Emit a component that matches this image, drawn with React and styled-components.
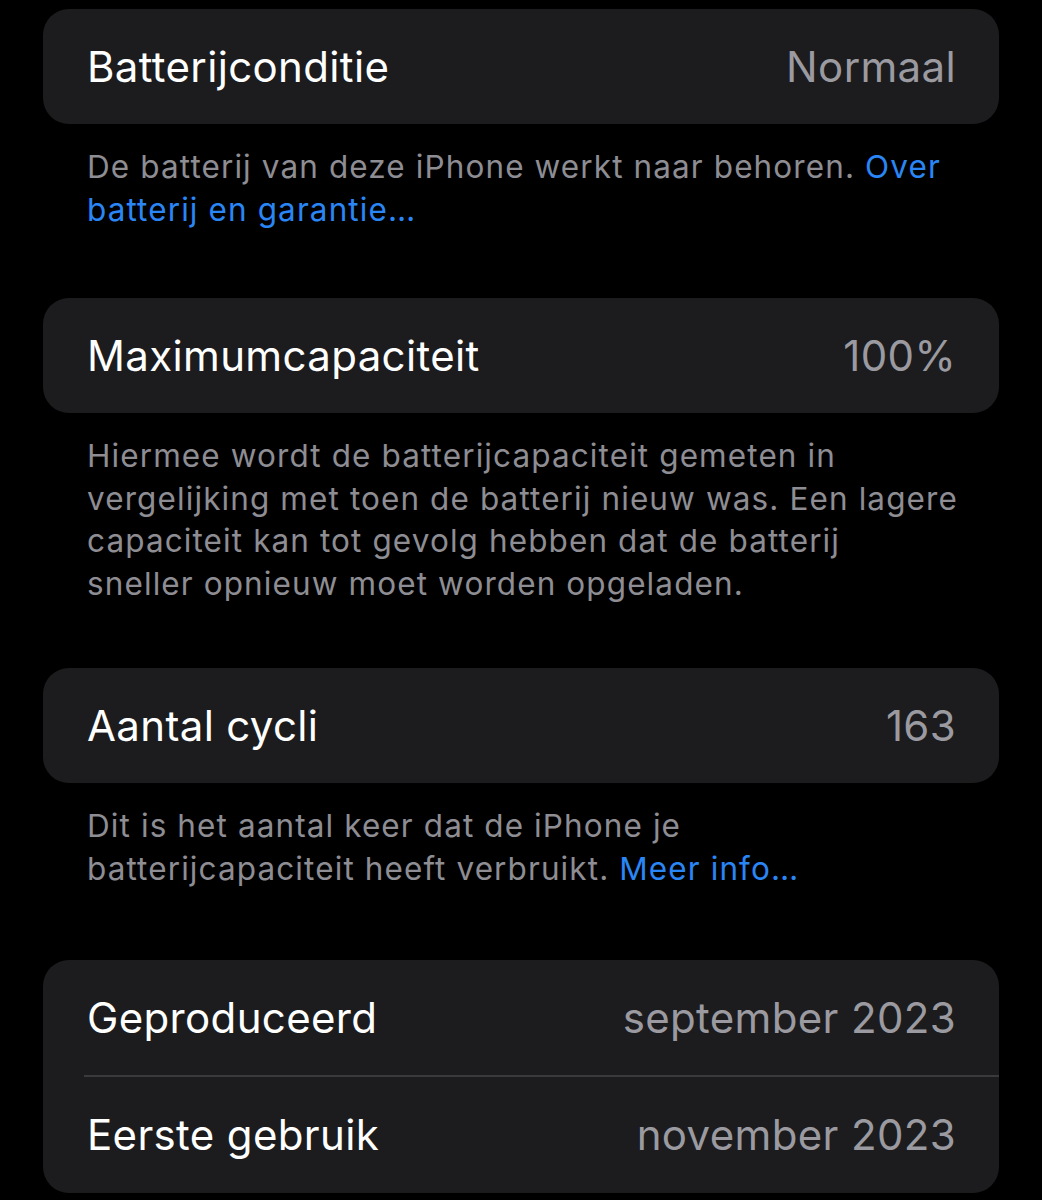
import styled, { createGlobalStyle } from "styled-components";

const GlobalStyle = createGlobalStyle`
  html, body {
    margin: 0;
    padding: 0;
    background: #000;
  }
  body {
    font-family: Inter, "Noto Sans", "Liberation Sans", sans-serif;
    -webkit-font-smoothing: antialiased;
  }
`;

const Page = styled.div`
  width: 956px;
  padding: 9px 43px 0;
  background: #000;
  min-height: 1200px;
  box-sizing: content-box;
`;

const Card = styled.div`
  background: #1c1c1e;
  border-radius: 26px;
  overflow: hidden;
`;

const Row = styled.div`
  height: ${(p) => p.$height || 115}px;
  padding: 0 43px 0 44px;
  display: flex;
  align-items: center;
  justify-content: space-between;
`;

const Label = styled.span`
  color: #fff;
  font-size: 42px;
  letter-spacing: 0.35px;
`;

const Value = styled.span`
  color: #9a9aa0;
  font-size: 42px;
  letter-spacing: 0.35px;
`;

const Divider = styled.div`
  height: 1.5px;
  margin-left: 41px;
  background: #3a3a3d;
`;

const Footer = styled.p`
  margin: 0;
  padding: 22px 20px ${(p) => p.$gap || 66}px 44px;
  color: #8d8d93;
  font-size: 31.5px;
  line-height: 42.5px;
  letter-spacing: 1.1px;
  white-space: nowrap;
`;

const Link = styled.a`
  color: #2a86f5;
  text-decoration: none;
`;

export default function App() {
  return (
    <>
      <GlobalStyle />
      <Page>
        <Card>
          <Row>
            <Label>Batterijconditie</Label>
            <Value>Normaal</Value>
          </Row>
        </Card>
        <Footer $gap={67}>
          De batterij van deze iPhone werkt naar behoren. <Link>Over</Link>
          <br />
          <Link>batterij en garantie…</Link>
        </Footer>

        <Card>
          <Row>
            <Label>Maximumcapaciteit</Label>
            <Value>100%</Value>
          </Row>
        </Card>
        <Footer $gap={63}>
          Hiermee wordt de batterijcapaciteit gemeten in
          <br />
          vergelijking met toen de batterij nieuw was. Een lagere
          <br />
          capaciteit kan tot gevolg hebben dat de batterij
          <br />
          sneller opnieuw moet worden opgeladen.
        </Footer>

        <Card>
          <Row>
            <Label>Aantal cycli</Label>
            <Value>163</Value>
          </Row>
        </Card>
        <Footer $gap={70}>
          Dit is het aantal keer dat de iPhone je
          <br />
          batterijcapaciteit heeft verbruikt. <Link>Meer info…</Link>
        </Footer>

        <Card>
          <Row>
            <Label>Geproduceerd</Label>
            <Value>september 2023</Value>
          </Row>
          <Divider />
          <Row $height={116}>
            <Label>Eerste gebruik</Label>
            <Value>november 2023</Value>
          </Row>
        </Card>
      </Page>
    </>
  );
}
